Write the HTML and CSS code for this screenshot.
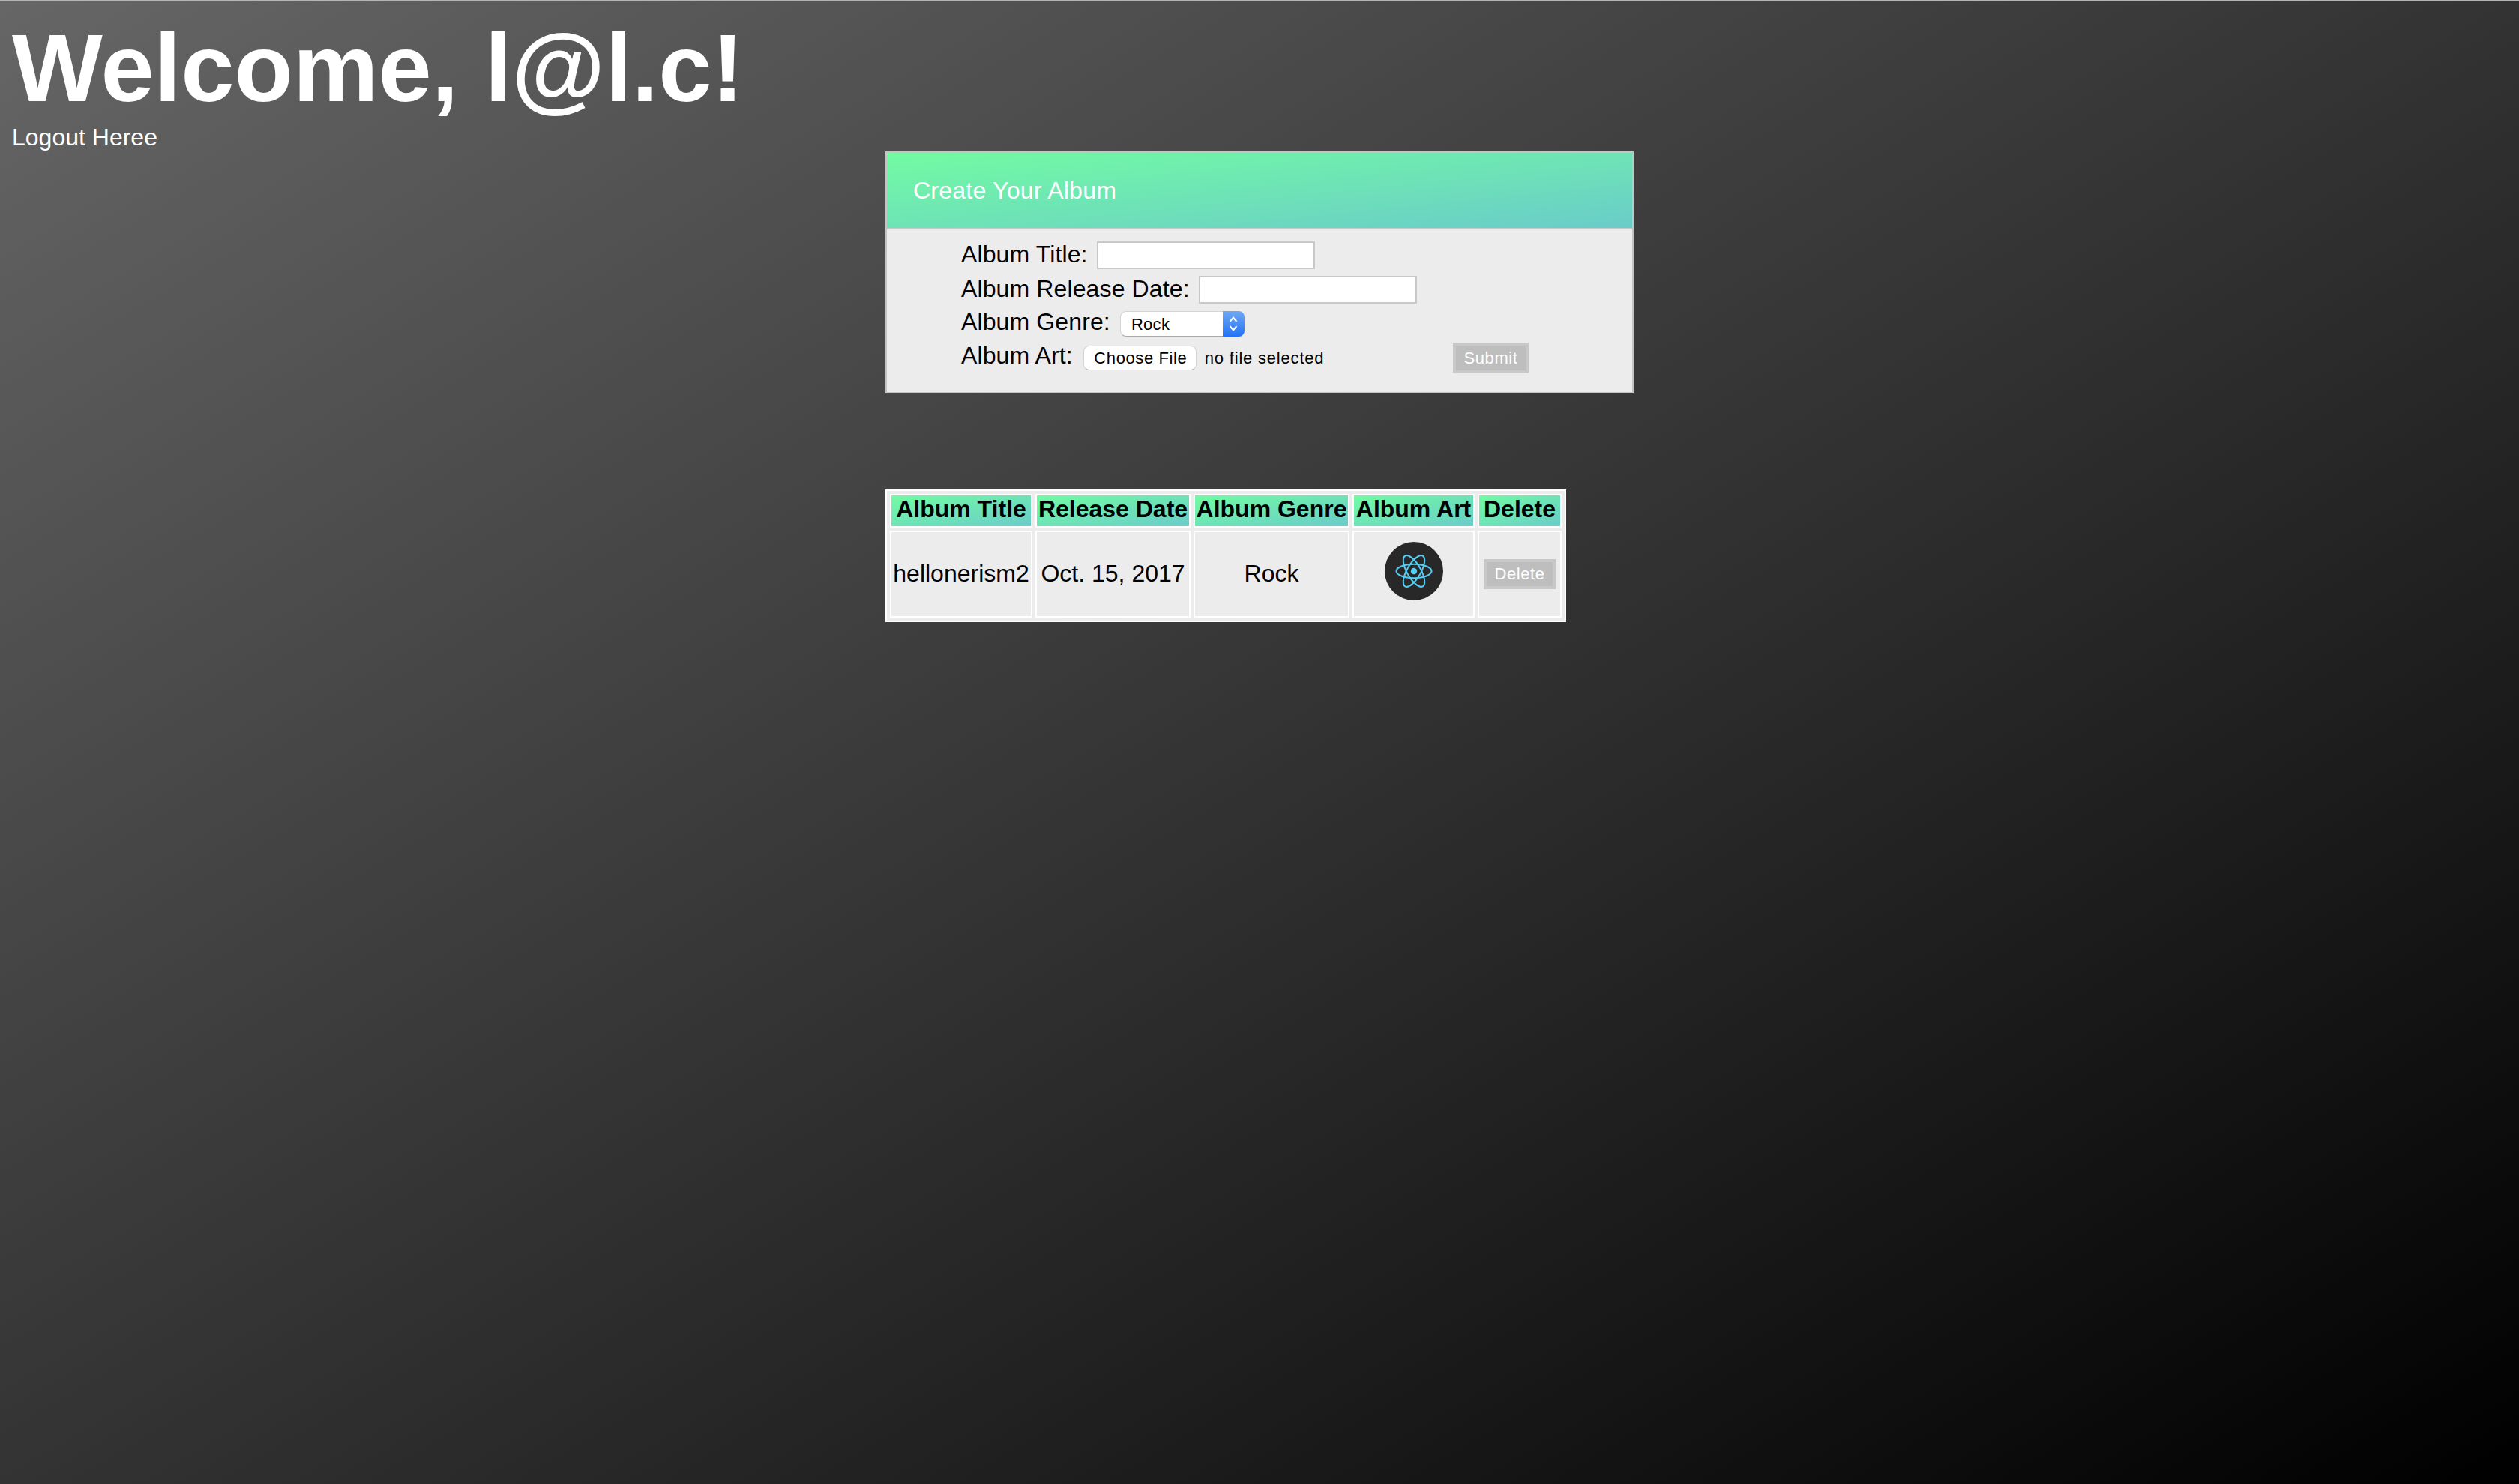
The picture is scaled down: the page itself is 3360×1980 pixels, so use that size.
FILE: index.html
```html
<!DOCTYPE html>
<html lang="en">
<head>
    <meta charset="UTF-8">
    <title>Albums</title>
    <link rel="stylesheet" href="styles.css">
</head>
<body>
    <h1>Welcome, l@l.c!</h1>
    <a class="logout" href="#">Logout Heree</a>

    <main class="content">
        <!-- Create form -->
        <form class="card">
            <h2 class="card-title">Create Your Album</h2>
            <div class="card-body">
                <div class="row row-title">
                    <label for="title">Album Title:</label>
                    <input type="text" id="title" class="text-input">
                </div>
                <div class="row row-date">
                    <label for="date">Album Release Date:</label>
                    <input type="text" id="date" class="text-input">
                </div>
                <div class="row row-genre">
                    <label for="genre">Album Genre:</label>
                    <div class="select-wrap">
                        <select id="genre" class="genre-select">
                            <option>Rock</option>
                        </select>
                        <span class="select-arrows">
                            <svg width="14" height="24" viewBox="0 0 14 24" fill="none" stroke="#fff" stroke-width="2">
                                <path d="M2.5 9 L7 3.5 L11.5 9"/>
                                <path d="M2.5 15 L7 20.5 L11.5 15"/>
                            </svg>
                        </span>
                    </div>
                </div>
                <div class="row row-art">
                    <label>Album Art:</label>
                    <button type="button" class="file-button">Choose File</button>
                    <span class="file-name">no file selected</span>
                    <button type="button" class="grey-button submit-button">Submit</button>
                </div>
            </div>
        </form>

        <!-- Album list -->
        <table class="albums">
            <thead>
                <tr>
                    <th class="col-title">Album Title</th>
                    <th class="col-date">Release Date</th>
                    <th class="col-genre">Album Genre</th>
                    <th class="col-art">Album Art</th>
                    <th class="col-delete">Delete</th>
                </tr>
            </thead>
            <tbody>
                <tr>
                    <td>hellonerism2</td>
                    <td>Oct. 15, 2017</td>
                    <td>Rock</td>
                    <td>
                        <svg class="album-art" width="78" height="78" viewBox="0 0 78 78" fill="none">
                            <circle cx="39" cy="39" r="39" fill="#282828"/>
                            <g stroke="#55cdf2" stroke-width="2">
                                <ellipse cx="39" cy="39" rx="23.5" ry="9.2"/>
                                <ellipse cx="39" cy="39" rx="23.5" ry="9.2" transform="rotate(60 39 39)"/>
                                <ellipse cx="39" cy="39" rx="23.5" ry="9.2" transform="rotate(120 39 39)"/>
                            </g>
                            <circle cx="39" cy="39" r="4.2" fill="#55cdf2"/>
                        </svg>
                    </td>
                    <td><button type="button" class="grey-button delete-button">Delete</button></td>
                </tr>
            </tbody>
        </table>
    </main>
</body>
</html>
```

FILE: styles.css
```css
/* General Styles */
html, body {
    margin: 0;
    height: 100%;
}

body {
    box-sizing: border-box;
    min-height: 1980px;
    padding: 18px 16px 0;
    border-top: 2px solid #b4b4b4;
    overflow: hidden;
    font-family: "Liberation Sans", Arial, sans-serif;
    font-size: 32px;
    color: #000;
    background: linear-gradient(to bottom right, #666, #000);
}

h1 {
    margin: 0;
    font-size: 128px;
    line-height: 142px;
    color: #fff;
}

.logout {
    display: block;
    height: 35px;
    margin-top: 3px;
    line-height: 36px;
    color: #fff;
    text-decoration: none;
}

.content {
    width: 998px;
    margin: 2px auto 0;
}

/* Form card */
.card {
    box-sizing: border-box;
    height: 323px;
    border: 2px solid #c4c4c4;
    background: #ececec;
}

.card-title {
    height: 100px;
    margin: 0;
    padding-left: 35px;
    border-bottom: 2px solid #c8c8c8;
    font-size: 32px;
    font-weight: normal;
    line-height: 100px;
    letter-spacing: 0.25px;
    color: #fff;
    background: linear-gradient(to bottom right, #72fba3, #6accc9);
}

.card-body {
    padding: 15px 138px 0 99px;
}

.row {
    display: flex;
    align-items: flex-start;
    line-height: 37px;
}

.row label {
    letter-spacing: 0.12px;
}

.row-title, .row-date {
    gap: 12px;
}

.row-title {
    height: 46px;
}

.row-date {
    height: 44px;
}

.row-genre {
    gap: 13px;
    height: 45px;
}

.row-art {
    gap: 14px;
}

.text-input {
    box-sizing: border-box;
    width: 291px;
    height: 37px;
    margin-top: 1px;
    padding: 0 6px;
    border: 2px solid #c8c8c8;
    border-radius: 0;
    background: #fff;
    outline: none;
}

.select-wrap {
    position: relative;
    width: 166px;
    height: 34px;
    margin-top: 4px;
}

.genre-select {
    appearance: none;
    box-sizing: border-box;
    display: block;
    width: 100%;
    height: 100%;
    padding: 0 0 0 14px;
    border: 1px solid #d4d4d4;
    border-bottom-color: #aaa;
    border-radius: 8px;
    font-family: "Liberation Sans", Arial, sans-serif;
    font-size: 22px;
    letter-spacing: 0.3px;
    color: #000;
    background: #fff;
}

.select-arrows {
    position: absolute;
    top: 0;
    right: 0;
    bottom: 0;
    display: flex;
    align-items: center;
    justify-content: center;
    width: 29px;
    border-radius: 0 8px 8px 0;
    background: linear-gradient(to bottom, #6ea9f7, #2473f5);
}

.file-button {
    box-sizing: border-box;
    width: 151px;
    height: 33px;
    margin-top: 5px;
    padding: 0 0 0 2px;
    border: 1px solid #d4d4d4;
    border-bottom-color: #aaa;
    border-radius: 8px;
    font-family: "Liberation Sans", Arial, sans-serif;
    font-size: 22px;
    letter-spacing: 0.6px;
    color: #000;
    background: #fff;
}

.file-name {
    margin: 3px 0 0 -3px;
    font-size: 22px;
    letter-spacing: 0.8px;
}

.grey-button {
    box-sizing: border-box;
    padding: 0;
    border: 4px solid #c8c8c8;
    font-family: "Liberation Sans", Arial, sans-serif;
    font-size: 22px;
    letter-spacing: 0.6px;
    color: #fff;
    background: #bebebe;
}

.submit-button {
    width: 101px;
    height: 40px;
    margin: 2px 0 0 auto;
}

/* Album table */
.albums {
    box-sizing: border-box;
    width: 908px;
    margin-top: 128px;
    table-layout: fixed;
    border: 2px solid #fff;
    border-spacing: 4px;
    background: #ececec;
}

.col-title { width: 190px; }
.col-date { width: 207px; }
.col-genre { width: 208px; }
.col-art { width: 163px; }
.col-delete { width: 112px; }

.albums th, .albums td {
    box-sizing: border-box;
    padding: 0;
    border: 2px solid #fff;
    text-align: center;
    white-space: nowrap;
}

.albums th {
    height: 44px;
    padding-bottom: 4px;
    font-weight: bold;
    background: linear-gradient(to bottom right, #72fba3, #6accc9);
}

.albums td {
    height: 116px;
    padding-bottom: 2px;
}

.album-art {
    display: block;
    margin: 0 auto 6px;
}

.delete-button {
    display: block;
    width: 96px;
    height: 40px;
    margin: 2px auto 0;
}
```
